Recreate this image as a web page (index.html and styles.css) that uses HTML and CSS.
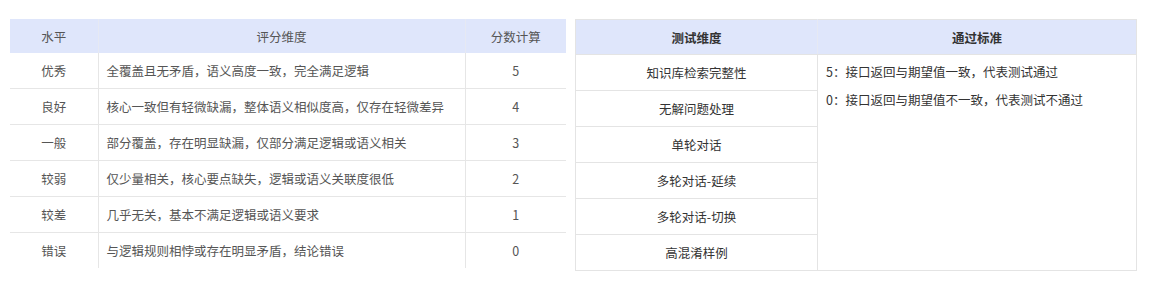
FILE: index.html
```html
<!DOCTYPE html>
<html lang="zh-CN">
<head>
<meta charset="utf-8">
<title>评分与测试标准</title>
<link rel="stylesheet" href="styles.css">
</head>
<body>
<div class="page">
  <table class="score">
    <colgroup>
      <col class="c1"><col class="c2"><col class="c3">
    </colgroup>
    <thead>
      <tr><th>水平</th><th>评分维度</th><th>分数计算</th></tr>
    </thead>
    <tbody>
      <tr><td class="ctr">优秀</td><td>全覆盖且无矛盾，语义高度一致，完全满足逻辑</td><td class="ctr">5</td></tr>
      <tr><td class="ctr">良好</td><td>核心一致但有轻微缺漏，整体语义相似度高，仅存在轻微差异</td><td class="ctr">4</td></tr>
      <tr><td class="ctr">一般</td><td>部分覆盖，存在明显缺漏，仅部分满足逻辑或语义相关</td><td class="ctr">3</td></tr>
      <tr><td class="ctr">较弱</td><td>仅少量相关，核心要点缺失，逻辑或语义关联度很低</td><td class="ctr">2</td></tr>
      <tr><td class="ctr">较差</td><td>几乎无关，基本不满足逻辑或语义要求</td><td class="ctr">1</td></tr>
      <tr><td class="ctr">错误</td><td>与逻辑规则相悖或存在明显矛盾，结论错误</td><td class="ctr">0</td></tr>
    </tbody>
  </table>

  <table class="test">
    <colgroup>
      <col class="t1"><col class="t2">
    </colgroup>
    <thead>
      <tr><th>测试维度</th><th>通过标准</th></tr>
    </thead>
    <tbody>
      <tr><td class="dim">知识库检索完整性</td>
        <td class="std" rowspan="6">
          <div class="line">5：接口返回与期望值一致，代表测试通过</div>
          <div class="line">0：接口返回与期望值不一致，代表测试不通过</div>
        </td></tr>
      <tr><td class="dim">无解问题处理</td></tr>
      <tr><td class="dim">单轮对话</td></tr>
      <tr><td class="dim">多轮对话-延续</td></tr>
      <tr><td class="dim">多轮对话-切换</td></tr>
      <tr><td class="dim">高混淆样例</td></tr>
    </tbody>
  </table>
</div>
</body>
</html>
```

FILE: styles.css
```css
html, body {
  margin: 0;
  padding: 0;
  background: #ffffff;
}

body {
  font-family: "Noto Sans CJK SC", "Noto Sans", "Liberation Sans", sans-serif;
  font-size: 12.5px;
}

.page {
  display: flex;
  align-items: flex-start;
  gap: 9px;
  padding: 19px 0 0 10px;
}

table {
  border-collapse: collapse;
  table-layout: fixed;
}

/* ---------- left: scoring table ---------- */
.score {
  width: 556px;
  color: #555555;
}
.score .c1 { width: 88px; }
.score .c2 { width: 367px; }
.score .c3 { width: 101px; }

.score th {
  height: 34px;
  padding: 0;
  background: #dfe6fb;
  font-weight: 400;
  text-align: center;
  color: #555555;
}
.score th + th {
  border-left: 1px solid #e6e9f3;
}

.score td {
  height: 35px;
  padding: 0 8px;
  border-bottom: 1px solid #e6e6e6;
  line-height: 20px;
  white-space: nowrap;
}
.score td + td {
  border-left: 1px solid #e6e6e6;
}
.score tbody tr:last-child td {
  border-bottom: 0;
}
.score td.ctr {
  text-align: center;
}

/* ---------- right: test table ---------- */
.test {
  width: 561px;
  border: 1px solid #e4e4e4;
  color: #333333;
}
.test .t1 { width: 242px; }
.test .t2 { width: 319px; }

.test th {
  height: 34px;
  padding: 0;
  background: #dfe6fb;
  font-weight: 700;
  text-align: center;
  color: #333333;
  border-bottom: 1px solid #e4e4e4;
}
.test th + th {
  border-left: 1px solid #e6e9f3;
}

.test td.dim {
  height: 35px;
  padding: 0;
  text-align: center;
  border-bottom: 1px solid #e4e4e4;
  line-height: 20px;
}
.test tbody tr:last-child td.dim {
  border-bottom: 0;
}

.test td.std {
  vertical-align: top;
  padding: 3px 8px 0;
  border-left: 1px solid #e4e4e4;
}
.test .line {
  line-height: 28px;
  white-space: nowrap;
}
```
